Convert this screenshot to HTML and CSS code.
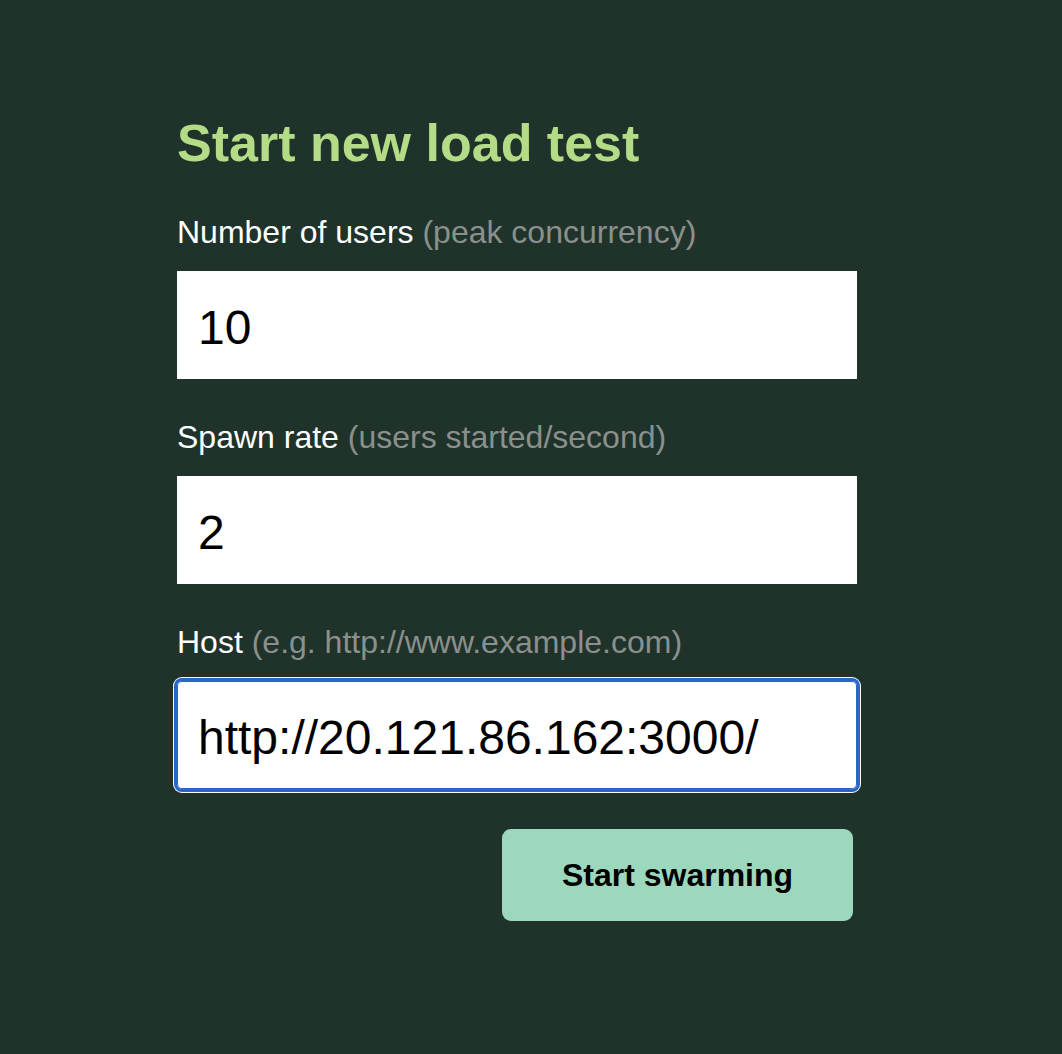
FILE: index.html
```html
<!DOCTYPE html>
<html lang="en">
<head>
<meta charset="utf-8">
<title>Start new load test</title>
<link rel="stylesheet" href="styles.css">
</head>
<body>
<main class="page">
  <form class="swarm-form">
    <h1 class="title">Start new load test</h1>
    <div class="field">
      <label class="label" for="users">Number of users <span class="hint">(peak concurrency)</span></label>
      <input class="input" id="users" type="text" value="10">
    </div>
    <div class="field">
      <label class="label" for="rate">Spawn rate <span class="hint">(users started/second)</span></label>
      <input class="input" id="rate" type="text" value="2">
    </div>
    <div class="field">
      <label class="label" for="host">Host <span class="hint">(e.g. http://www.example.com)</span></label>
      <input class="input input-focused" id="host" type="text" value="http://20.121.86.162:3000/">
    </div>
    <div class="actions">
      <button class="btn" type="button">Start swarming</button>
    </div>
  </form>
</main>
</body>
</html>
```

FILE: styles.css
```css
html, body {
  margin: 0;
  padding: 0;
  background: #1f332b;
  height: 100%;
}

body {
  font-family: "Liberation Sans", Arial, Helvetica, sans-serif;
  color: #ffffff;
}

.page {
  padding: 112px 0 0 177px;
}

.swarm-form {
  width: 680px;
  display: flex;
  flex-direction: column;
}

.title {
  margin: 0;
  font-size: 52px;
  line-height: 62px;
  font-weight: bold;
  color: #b4dc86;
}

.field {
  display: flex;
  flex-direction: column;
  margin-top: 38px;
}

.label {
  font-size: 32px;
  line-height: 40px;
  color: #ffffff;
  margin-bottom: 19px;
}

.hint {
  color: #8b908d;
}

.input {
  box-sizing: border-box;
  width: 680px;
  height: 108px;
  margin: 0;
  border: 0;
  border-radius: 0;
  padding: 4px 20px 0 21px;
  background: #ffffff;
  font-family: "Liberation Sans", Arial, Helvetica, sans-serif;
  font-size: 48px;
  color: #000000;
  outline: none;
}

.input-focused {
  border-radius: 5px;
  box-shadow: inset 0 0 0 1px #2966c8, 0 0 0 3px #2966c8, 0 0 0 4px #ffffff;
}

.actions {
  display: flex;
  justify-content: flex-end;
  margin-top: 40px;
  padding-right: 4px;
}

.btn {
  width: 351px;
  height: 92px;
  border: 0;
  border-radius: 9px;
  background: #9bd8bd;
  color: #000000;
  font-family: "Liberation Sans", Arial, Helvetica, sans-serif;
  font-size: 32px;
  font-weight: bold;
  cursor: pointer;
}
```
